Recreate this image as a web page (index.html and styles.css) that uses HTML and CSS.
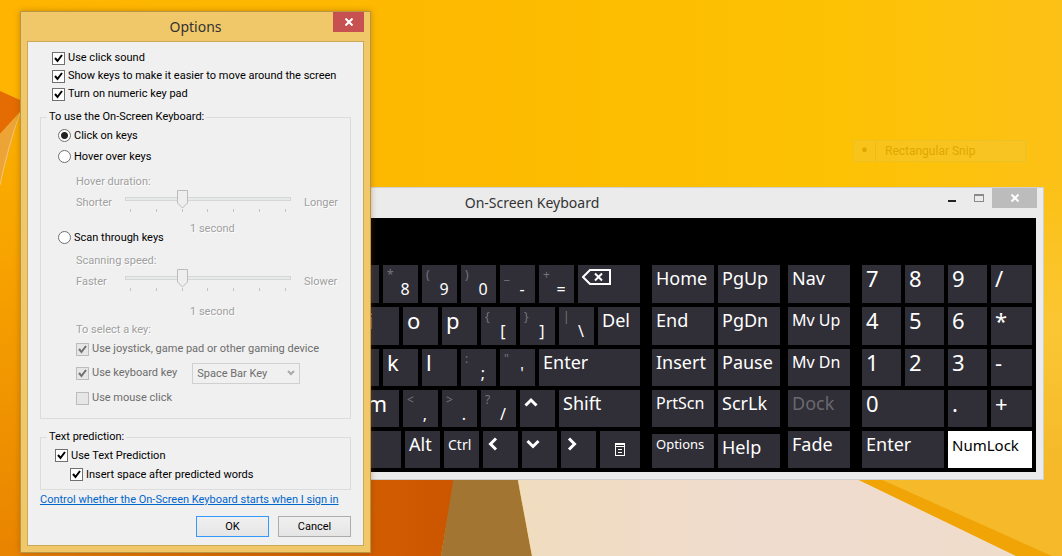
FILE: index.html
```html
<!DOCTYPE html>
<html lang="en">
<head>
  <meta charset="UTF-8" />
  <meta name="viewport" content="width=device-width, initial-scale=1.0"/>
  <title>On-Screen Keyboard</title>
  <link rel="stylesheet" href="styles.css">
</head>
<body>
  <svg class="wallpaper" viewBox="0 0 1062 556" preserveAspectRatio="none" aria-hidden="true">
    <defs>
      <linearGradient id="sky" x1="0" y1="0" x2="1" y2="0">
        <stop offset="0" stop-color="#feb400"/>
        <stop offset="0.5" stop-color="#fdbb00"/>
        <stop offset="0.8" stop-color="#fdc204"/>
        <stop offset="1" stop-color="#fcc116"/>
      </linearGradient>
      <linearGradient id="leftSide" x1="0" y1="0" x2="0" y2="1">
        <stop offset="0" stop-color="#fbb000"/>
        <stop offset="0.3" stop-color="#f8a500"/>
        <stop offset="1" stop-color="#e98400"/>
      </linearGradient>
      <linearGradient id="fold" x1="0" y1="0" x2="1" y2="0">
        <stop offset="0" stop-color="#e67c00"/>
        <stop offset="1" stop-color="#cc5500"/>
      </linearGradient>
      <linearGradient id="paper" x1="0" y1="0" x2="1" y2="0">
        <stop offset="0" stop-color="#f0dcbe"/>
        <stop offset="0.5" stop-color="#f0dccf"/>
        <stop offset="1" stop-color="#efdcca"/>
      </linearGradient>
      <linearGradient id="rightSide" x1="0" y1="0" x2="0" y2="1">
        <stop offset="0" stop-color="#fcc116"/>
        <stop offset="0.4" stop-color="#fac634"/>
        <stop offset="0.77" stop-color="#f5b929"/>
      </linearGradient>
    </defs>
    <rect width="1062" height="556" fill="url(#sky)"/>
    <polygon points="1040,180 1062,180 1062,556 1040,556" fill="url(#rightSide)"/>
    <polygon points="0,134 30,100 30,556 0,556" fill="url(#leftSide)"/>
    <polygon points="0,91 20,100 20,112 0,134" fill="#e46c02"/>
    <polygon points="0,134 20,112 0,185" fill="#eda436"/>
    <path d="M20 113Q9 143 0 185" fill="none" stroke="#f7c76c"/>
    <polygon points="20,470 456,470 441,556 20,556" fill="url(#fold)"/>
    <polygon points="0,540 20,540 20,556 0,556" fill="#e98400"/>
    <polygon points="455,470 516,470 532,556 441,556" fill="#a37532"/>
    <polygon points="516,470 840,470 1018,556 532,556" fill="url(#paper)"/>
    <polygon points="850,470 1062,470 1062,556 1018,556 860,480" fill="#f5b929"/>
    <polygon points="838,470 860,470 1052,556 1016,556" fill="#f0a406"/>
  </svg>

  <div class="snip">
    <span class="snip-dot">&bull;</span>
    <span class="snip-text">Rectangular Snip</span>
  </div>

  <section class="keyboard">
    <header class="keyboard-title">
      <h1>On-Screen Keyboard</h1>
      <div class="window-buttons">
        <button class="win-btn" aria-label="Minimize"><svg width="10" height="10"><rect x="1" y="7" width="8" height="2" fill="#222"/></svg></button>
        <button class="win-btn" aria-label="Maximize"><svg width="10" height="8"><path d="M0 0h10v8H0zM1 2v5h8V2z" fill="#8a8a8a" fill-rule="evenodd"/></svg></button>
        <button class="win-btn win-close" aria-label="Close"><svg width="8" height="8" viewBox="0 0 8 8"><path d="M0.500 0.500L7.500 7.500M7.500 0.500L0.500 7.500" stroke="#fff" stroke-width="2"/></svg></button>
      </div>
    </header>
    <div class="board">
      <div class="main-keys">
        <div class="row">
          <button class="key wide" aria-label="blank"></button>
          <button class="key two"><small>*</small><span>8</span></button>
          <button class="key two"><small>(</small><span>9</span></button>
          <button class="key two"><small>)</small><span>0</span></button>
          <button class="key two"><small>_</small><span>-</span></button>
          <button class="key two"><small>+</small><span>=</span></button>
          <button class="key backspace" aria-label="Backspace">
            <svg width="29" height="16" viewBox="0 0 29 16"><path d="M8 1H28V15H8L1 8Z" fill="none" stroke="#fff" stroke-width="2"/><path d="M13 4.500L20 11.500M20 4.500L13 11.500" stroke="#fff" stroke-width="2"/></svg>
          </button>
        </div>
        <div class="row">
          <button class="key letter wide narrow-end">i</button>
          <button class="key letter">o</button>
          <button class="key letter">p</button>
          <button class="key two"><small>{</small><span>[</span></button>
          <button class="key two"><small>}</small><span>]</span></button>
          <button class="key two"><small>|</small><span>\</span></button>
          <button class="key del">Del</button>
        </div>
        <div class="row">
          <button class="key wide" aria-label="blank"></button>
          <button class="key letter">k</button>
          <button class="key letter">l</button>
          <button class="key two"><small>:</small><span>;</span></button>
          <button class="key two"><small>"</small><span>'</span></button>
          <button class="key enter">Enter</button>
        </div>
        <div class="row">
          <button class="key letter wide end">m</button>
          <button class="key two"><small>&lt;</small><span>,</span></button>
          <button class="key two"><small>&gt;</small><span>.</span></button>
          <button class="key two"><small>?</small><span>/</span></button>
          <button class="key" aria-label="Up"><svg width="14" height="14" viewBox="0 0 14 14"><path d="M1.500 9.500L7 4L12.500 9.500" fill="none" stroke="#fff" stroke-width="3"/></svg></button>
          <button class="key shift">Shift</button>
        </div>
        <div class="row">
          <button class="key wide" aria-label="Space"></button>
          <button class="key">Alt</button>
          <button class="key small">Ctrl</button>
          <button class="key" aria-label="Left"><svg width="14" height="14" viewBox="0 0 14 14"><path d="M9 1.500L3.500 7L9 12.500" fill="none" stroke="#fff" stroke-width="3"/></svg></button>
          <button class="key" aria-label="Down"><svg width="14" height="14" viewBox="0 0 14 14"><path d="M1.500 4L7 9.500L12.500 4" fill="none" stroke="#fff" stroke-width="3"/></svg></button>
          <button class="key" aria-label="Right"><svg width="14" height="14" viewBox="0 0 14 14"><path d="M4 1.500L9.500 7L4 12.500" fill="none" stroke="#fff" stroke-width="3"/></svg></button>
          <button class="key menu" aria-label="Menu">
            <svg width="10" height="13" viewBox="0 0 10 13"><path d="M0 0h10v13H0zM1 2v1h8V2zM1 4v8h8V4z" fill="#fff" fill-rule="evenodd"/><path d="M3 6.500h4M3 9.500h4" stroke="#fff"/></svg>
          </button>
        </div>
      </div>

      <div class="nav-keys">
        <button class="key">Home</button>
        <button class="key">PgUp</button>
        <button class="key gap">Nav</button>
        <button class="key">End</button>
        <button class="key">PgDn</button>
        <button class="key medium gap">Mv Up</button>
        <button class="key">Insert</button>
        <button class="key">Pause</button>
        <button class="key medium gap">Mv Dn</button>
        <button class="key medium">PrtScn</button>
        <button class="key">ScrLk</button>
        <button class="key gap" disabled>Dock</button>
        <button class="key tiny low">Options</button>
        <button class="key low">Help</button>
        <button class="key gap">Fade</button>
      </div>

      <div class="num-keys">
        <button class="key digit">7</button>
        <button class="key digit">8</button>
        <button class="key digit">9</button>
        <button class="key digit">/</button>
        <button class="key digit">4</button>
        <button class="key digit">5</button>
        <button class="key digit">6</button>
        <button class="key digit">*</button>
        <button class="key digit">1</button>
        <button class="key digit">2</button>
        <button class="key digit">3</button>
        <button class="key digit">-</button>
        <button class="key digit double">0</button>
        <button class="key digit">.</button>
        <button class="key digit">+</button>
        <button class="key double">Enter</button>
        <button class="key double active">NumLock</button>
      </div>
    </div>
  </section>

  <section class="dialog">
    <header class="dialog-title">
      <h2>Options</h2>
      <button class="dialog-close" aria-label="Close"><svg width="8" height="8" viewBox="0 0 8 8"><path d="M0.500 0.500L7.500 7.500M7.500 0.500L0.500 7.500" stroke="#fff" stroke-width="2"/></svg></button>
    </header>
    <form class="dialog-body">
      <div class="top-options">
        <label class="option"><input type="checkbox" checked>Use click sound</label>
        <label class="option"><input type="checkbox" checked>Show keys to make it easier to move around the screen</label>
        <label class="option"><input type="checkbox" checked>Turn on numeric key pad</label>
      </div>

      <fieldset class="use-group">
        <legend>To use the On-Screen Keyboard:</legend>
        <label class="option mode"><input type="radio" name="mode" checked>Click on keys</label>
        <label class="option mode"><input type="radio" name="mode">Hover over keys</label>
        <div class="speed">
          <label for="hover">Hover duration:</label>
          <div class="slider-row">
            <span>Shorter</span>
            <div class="slider">
              <input type="range" id="hover" min="0" max="6" value="2" disabled>
              <div class="ticks"><i></i><i></i><i></i><i></i><i></i><i></i><i></i></div>
            </div>
            <span>Longer</span>
          </div>
          <output for="hover">1 second</output>
        </div>
        <label class="option mode scan"><input type="radio" name="mode">Scan through keys</label>
        <div class="speed">
          <label for="scan">Scanning speed:</label>
          <div class="slider-row">
            <span>Faster</span>
            <div class="slider">
              <input type="range" id="scan" min="0" max="6" value="2" disabled>
              <div class="ticks"><i></i><i></i><i></i><i></i><i></i><i></i><i></i></div>
            </div>
            <span>Slower</span>
          </div>
          <output for="scan">1 second</output>
        </div>
        <div class="select-key">
          <p>To select a key:</p>
          <label class="option off"><input type="checkbox" checked disabled>Use joystick, game pad or other gaming device</label>
          <div class="key-choice">
            <label class="option off"><input type="checkbox" checked disabled>Use keyboard key</label>
            <select aria-label="Keyboard key" disabled><option>Space Bar Key</option></select>
          </div>
          <label class="option off"><input type="checkbox" disabled>Use mouse click</label>
        </div>
      </fieldset>

      <fieldset class="text-group">
        <legend>Text prediction:</legend>
        <label class="option"><input type="checkbox" checked>Use Text Prediction</label>
        <label class="option indent"><input type="checkbox" checked>Insert space after predicted words</label>
      </fieldset>

      <a href="#">Control whether the On-Screen Keyboard starts when I sign in</a>
      <div class="actions">
        <button type="button" class="btn primary">OK</button>
        <button type="button" class="btn">Cancel</button>
      </div>
    </form>
  </section>
</body>
</html>
```

FILE: styles.css
```css
* {
  box-sizing: border-box;
}
body {
  margin: 0;
  min-height: 100vh;
  position: relative;
  overflow: hidden;
  background: #fdb900;
  font-family: Roboto, "Noto Sans", sans-serif;
  font-size: 11px;
  color: #000;
}
button, input, select {
  font: inherit;
  margin: 0;
}
h1, h2 {
  margin: 0;
  font-family: "Noto Sans", "Open Sans", sans-serif;
  font-weight: 400;
  font-size: 14px;
  color: #333;
  text-align: center;
}
.wallpaper {
  position: absolute;
  width: 100%;
  height: 100%;
}

/* faded snip menu item */
.snip {
  position: absolute;
  top: 140px;
  right: 36px;
  width: 173px;
  height: 22px;
  display: flex;
  align-items: center;
  border: 1px solid rgba(225, 190, 40, 0.5);
  background: rgba(240, 200, 60, 0.4);
  color: #dfa800;
  font-size: 12px;
}
.snip-dot {
  width: 22px;
  height: 20px;
  line-height: 20px;
  font-size: 22px;
  text-align: center;
  border-right: 1px solid rgba(225, 180, 20, 0.5);
}
.snip-text {
  padding-left: 9px;
}

/* keyboard window */
.keyboard {
  position: absolute;
  top: 187px;
  left: 20px;
  right: 18px;
  padding: 0 7px 7px;
  background: #ebebeb;
  border: 1px solid #d0d0d0;
}
.keyboard-title {
  position: relative;
  height: 30px;
}
.keyboard-title h1 {
  line-height: 30px;
}
.window-buttons {
  position: absolute;
  top: 0;
  right: -1px;
  display: flex;
}
.win-btn {
  width: 27px;
  height: 20px;
  padding: 0;
  border: none;
  background: none;
  display: flex;
  align-items: center;
  justify-content: center;
}
.win-close {
  width: 45px;
  background: #bcbcbc;
}
.board {
  display: flex;
  gap: 12px;
  padding: 47px 4px 4px;
  background: #000;
}
.main-keys {
  flex: 1;
  display: grid;
  grid-template-rows: 38px 38px 37px 37px 37px;
  gap: 4px;
}
.row {
  display: flex;
  gap: 4px;
}
.key {
  flex: 0 0 35px;
  min-width: 0;
  padding: 0 0 0 4px;
  border: none;
  background: #302e37;
  color: #fff;
  font-family: "Noto Sans", "Open Sans", sans-serif;
  font-size: 18px;
  line-height: 26px;
  text-align: left;
  display: flex;
  align-items: flex-start;
}
.key svg {
  margin-top: 6px;
}
.key.wide {
  flex: 1;
}
.key.end {
  justify-content: flex-end;
  padding-right: 12px;
}
.key.narrow-end {
  justify-content: flex-end;
  padding-right: 26px;
}
.key.letter {
  font-size: 22px;
}
.key.two {
  display: grid;
  grid-template-columns: 5px 1fr;
  padding: 0 0 0 4px;
}
.key.two small {
  color: #77757c;
  font-size: 12px;
  line-height: 20px;
}
.key.two span {
  font-size: 16px;
  line-height: 22px;
  text-align: center;
  padding-top: 13px;
}
.key.backspace {
  flex-basis: 62px;
}
.key.backspace svg {
  margin-top: 4px;
}
.key.del {
  flex-basis: 42px;
}
.key.enter {
  flex-basis: 101px;
}
.key.shift {
  flex-basis: 81px;
}
.key.menu {
  flex-basis: 40px;
  align-items: center;
  justify-content: center;
  padding: 0;
}
.key.menu svg {
  margin: 0;
}
.key.medium {
  font-size: 16px;
}
.key.small {
  font-size: 14px;
  line-height: 28px;
}
.key.tiny {
  font-size: 13px;
  line-height: 20px;
}
.nav-keys {
  display: grid;
  grid-template-columns: 62px 62px 66px;
  grid-template-rows: 38px 38px 37px 37px 37px;
  gap: 4px;
}
.key.gap {
  margin-left: 4px;
}
.key.low {
  margin-top: 3px;
}
.key:disabled {
  color: #6a6970;
}
.num-keys {
  display: grid;
  grid-template-columns: 39px 39px 39px 41px;
  grid-template-rows: 38px 38px 37px 37px 37px;
  gap: 4px;
}
.key.digit {
  font-size: 22px;
}
.key.double {
  grid-column: span 2;
}
.key.active {
  background: #fff;
  color: #000;
  font-size: 15px;
  line-height: 28px;
}

/* options dialog */
.dialog {
  position: absolute;
  top: 11px;
  left: 20px;
  width: 351px;
  padding: 0 6px 6px;
  background: #f0c869;
  border: 1px solid #b99645;
  box-shadow: 0 0 6px rgba(120, 70, 0, 0.4);
}
.dialog-title {
  position: relative;
  height: 29px;
}
.dialog-title h2 {
  line-height: 30px;
}
.dialog-close {
  position: absolute;
  top: 0;
  right: 0;
  width: 31px;
  height: 20px;
  padding: 0;
  border: none;
  background: #c75050;
  display: flex;
  align-items: center;
  justify-content: center;
}
.dialog-body {
  padding: 7px 12px 8px;
  background: #f0f0f0;
  border: 1px solid #c9a85a;
}
.top-options {
  padding-left: 12px;
}
.option {
  display: flex;
  align-items: center;
  gap: 3px;
  line-height: 18px;
}
input[type="checkbox"], input[type="radio"] {
  appearance: none;
  flex: none;
  width: 13px;
  height: 13px;
  background: #fff center no-repeat;
  border: 1px solid #707070;
}
input[type="radio"] {
  border-radius: 50%;
}
input[type="radio"]:checked {
  background-image: radial-gradient(circle, #222 3px, transparent 4px);
}
input[type="checkbox"]:checked {
  background-image: url("data:image/svg+xml,%3Csvg xmlns='http://www.w3.org/2000/svg' width='11' height='11'%3E%3Cpath d='M2 5L4.500 8L9 2' fill='none' stroke='%23000' stroke-width='2'/%3E%3C/svg%3E");
}
input[type="checkbox"]:disabled {
  background-color: #e6e6e6;
  border-color: #bcbcbc;
}
input[type="checkbox"]:checked:disabled {
  background-image: url("data:image/svg+xml,%3Csvg xmlns='http://www.w3.org/2000/svg' width='11' height='11'%3E%3Cpath d='M2 5L4.500 8L9 2' fill='none' stroke='%23707070' stroke-width='2'/%3E%3C/svg%3E");
}
fieldset {
  margin: 6px 0 0;
  padding: 0;
  border: 1px solid #dcdcdc;
}
legend {
  margin-left: 6px;
  padding: 0 2px;
  line-height: 16px;
}
.mode {
  padding-left: 17px;
  line-height: 21px;
}
.speed {
  padding: 6px 0 0 35px;
  color: #a0a0a0;
  text-shadow: 1px 1px #fff;
}
.speed > label {
  display: block;
  line-height: 18px;
}
.slider-row {
  display: grid;
  grid-template-columns: 49px 166px auto;
  line-height: 24px;
}
.slider-row > span:last-child {
  padding-left: 13px;
}
.slider {
  margin-top: -2px;
}
.slider input {
  appearance: none;
  display: block;
  width: 100%;
  height: 19px;
  background: none;
}
.slider input::-webkit-slider-runnable-track {
  height: 4px;
  background: #e7eaea;
  border: 1px solid #d6d6d6;
}
.slider input::-webkit-slider-thumb {
  appearance: none;
  width: 11px;
  height: 19px;
  margin-top: -8px;
  background: url("data:image/svg+xml,%3Csvg xmlns='http://www.w3.org/2000/svg' width='11' height='19'%3E%3Cpath d='M.5 .5H10.500V13L5.500 18L.5 13Z' fill='%23eeeeee' stroke='%23bcbcbc'/%3E%3C/svg%3E");
}
.ticks {
  display: flex;
  justify-content: space-between;
  padding: 1px 5px 0;
}
.ticks i {
  width: 1px;
  height: 3px;
  background: #c4c4c4;
}
.speed output {
  display: block;
  padding: 7px 0 0 114px;
  line-height: 14px;
}
.scan {
  margin-top: -9px;
}
.scan + .speed {
  padding-top: 4px;
}
.scan + .speed output {
  padding-top: 11px;
}
.select-key {
  padding: 2px 0 9px 35px;
}
.select-key p {
  margin: 0;
  line-height: 17px;
  color: #a0a0a0;
  text-shadow: 1px 1px #fff;
}
.off {
  color: #6d6d6d;
  line-height: 22px;
}
.key-choice {
  display: flex;
  align-items: center;
  gap: 15px;
  padding: 2px 0 3px;
}
select {
  appearance: none;
  width: 108px;
  height: 21px;
  padding: 0 4px;
  border: 1px solid #d0d0d0;
  border-radius: 0;
  background: url("data:image/svg+xml,%3Csvg xmlns='http://www.w3.org/2000/svg' width='8' height='6'%3E%3Cpath d='M1 1L4 4L7 1' fill='none' stroke='%23aaa' stroke-width='2'/%3E%3C/svg%3E") no-repeat right 4px center;
}
select:disabled {
  color: #6d6d6d;
  opacity: 1;
}
.text-group {
  margin-top: 10px;
  padding: 1px 0 5px 14px;
}
.text-group legend {
  margin-left: -8px;
}
.text-group .option {
  line-height: 19px;
}
.indent {
  padding-left: 15px;
}
.dialog-body a {
  display: block;
  line-height: 20px;
  color: #0066cc;
}
.actions {
  display: flex;
  justify-content: flex-end;
  gap: 9px;
  padding-top: 6px;
}
.btn {
  width: 73px;
  height: 21px;
  padding: 0;
  border: 1px solid #acacac;
  background: linear-gradient(#f0f0f0, #e5e5e5);
  color: #000;
}
.btn.primary {
  border-color: #3399ff;
}
```
